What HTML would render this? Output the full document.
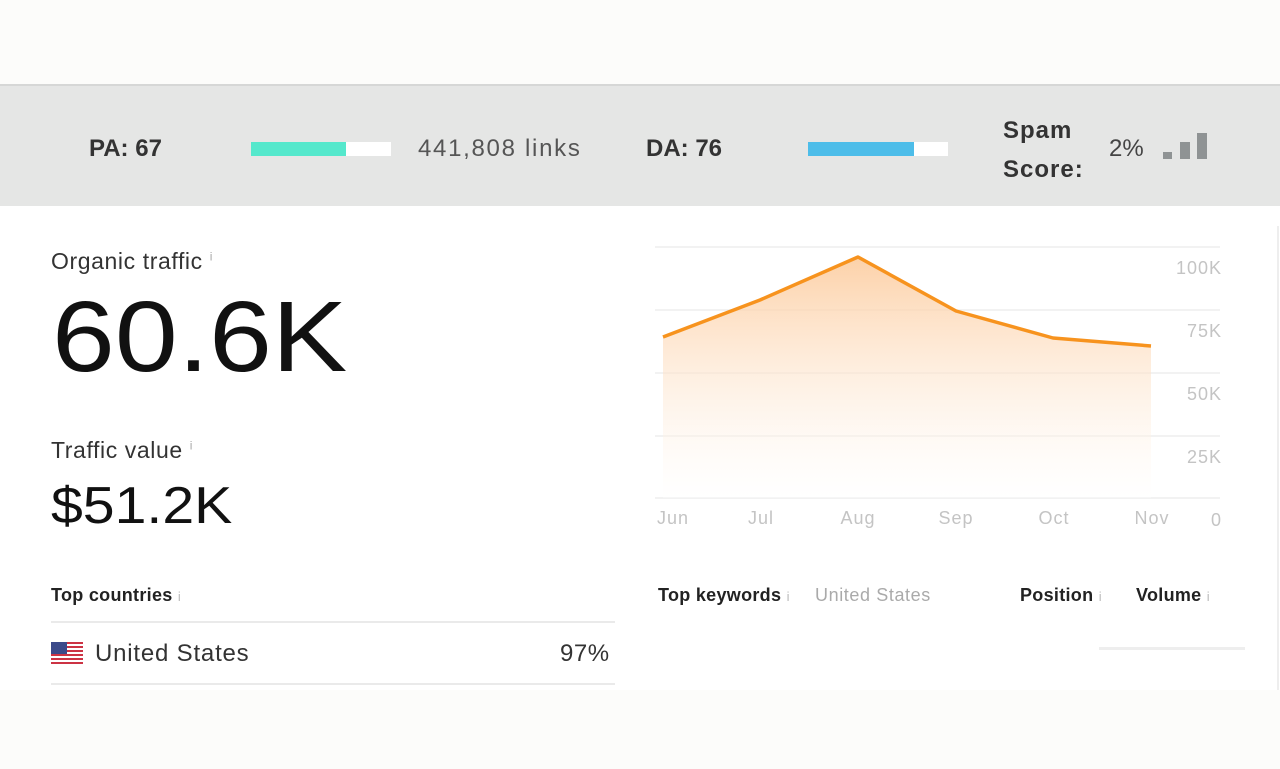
<!DOCTYPE html>
<html><head><meta charset="utf-8"><style>
*{margin:0;padding:0;box-sizing:border-box}
body{width:1280px;height:769px;background:#fcfcfa;position:relative;overflow:hidden;font-family:"Liberation Sans",sans-serif;color:#222}
.a{position:absolute;white-space:nowrap}
.band{position:absolute;left:0;top:84px;width:1280px;height:122px;background:#e5e6e5;border-top:2px solid #d6d7d6}
.main{position:absolute;left:0;top:206px;width:1280px;height:484px;background:#fff}
.b{font-weight:bold;color:#333}
</style></head><body>
<div class="band"></div>
<div class="main"></div>
<div class="a b" style="left:89px;top:135px;font-size:24px">PA: 67</div>
<div class="a" style="left:251px;top:142px;width:140px;height:14px;background:#fff"><div style="width:95px;height:14px;background:#55e8cc"></div></div>
<div class="a" style="left:418px;top:135px;font-size:24px;color:#555;letter-spacing:1.7px">441,808 links</div>
<div class="a b" style="left:646px;top:135px;font-size:24px">DA: 76</div>
<div class="a" style="left:808px;top:142px;width:140px;height:14px;background:#fff"><div style="width:106px;height:14px;background:#4dbde9"></div></div>
<div class="a b" style="left:1003px;top:111px;font-size:24px;line-height:39px;letter-spacing:1px">Spam<br>Score:</div>
<div class="a" style="left:1109px;top:135px;font-size:24px;color:#444">2%</div>
<div class="a" style="left:1163px;top:152px;width:9px;height:7px;background:#8f9394"></div>
<div class="a" style="left:1180px;top:142px;width:10px;height:17px;background:#8f9394"></div>
<div class="a" style="left:1197px;top:133px;width:10px;height:26px;background:#8f9394"></div>
<div class="a" style="left:1277px;top:226px;width:2px;height:464px;background:#eee"></div>

<div class="a" style="left:51px;top:248px;font-size:23px;color:#333;letter-spacing:0.6px">Organic traffic <sup style="font-size:12px;color:#aaa">i</sup></div>
<div class="a" style="left:52px;top:280px;font-size:100px;color:#111;transform:scaleX(1.13);transform-origin:left">60.6K</div>
<div class="a" style="left:51px;top:437px;font-size:23px;color:#333;letter-spacing:0.6px">Traffic value <sup style="font-size:12px;color:#aaa">i</sup></div>
<div class="a" style="left:51px;top:476px;font-size:52px;color:#111;transform:scaleX(1.1);transform-origin:left">$51.2K</div>
<div class="a b" style="left:51px;top:585px;font-size:18px;color:#222;letter-spacing:0.3px">Top countries <span style="font-weight:normal;color:#bbb;font-size:13px">i</span></div>
<div class="a" style="left:51px;top:621px;width:564px;height:2px;background:#eaeaea"></div>
<div class="a" style="left:51px;top:642px;width:32px;height:24px;background:repeating-linear-gradient(#c34 0 2px,#fff 2px 4px)"><div style="width:16px;height:12px;background:#3b4a8a"></div></div>
<div class="a" style="left:95px;top:640px;font-size:24px;color:#333;letter-spacing:0.8px">United States</div>
<div class="a" style="left:560px;top:640px;font-size:24px;color:#333;letter-spacing:0.5px">97%</div>
<div class="a" style="left:51px;top:683px;width:564px;height:2px;background:#eaeaea"></div>

<svg class="a" style="left:0;top:0" width="1280" height="769">
<defs><linearGradient id="g" x1="0" y1="0" x2="0" y2="1"><stop offset="0" stop-color="#fcc999" stop-opacity=".85"/><stop offset="1" stop-color="#fff" stop-opacity=".3"/></linearGradient></defs>
<g stroke="#eee" stroke-width="1.5"><line x1="655" y1="247" x2="1220" y2="247"/><line x1="655" y1="310" x2="1220" y2="310"/><line x1="655" y1="373" x2="1220" y2="373"/><line x1="655" y1="436" x2="1220" y2="436"/><line x1="655" y1="498" x2="1220" y2="498"/></g>
<path d="M663 337L760 300L858 257L956 311L1053 338L1151 346L1151 498L663 498Z" fill="url(#g)"/>
<path d="M663 337L760 300L858 257L956 311L1053 338L1151 346" fill="none" stroke="#f7931e" stroke-width="3.5" stroke-linejoin="round"/>
<g font-family="Liberation Sans" font-size="18" fill="#c4c4c4" text-anchor="end" letter-spacing="1"><text x="1222" y="274">100K</text><text x="1222" y="337">75K</text><text x="1222" y="400">50K</text><text x="1222" y="463">25K</text><text x="1222" y="526">0</text></g>
<g font-family="Liberation Sans" font-size="18" fill="#c4c4c4" text-anchor="middle" letter-spacing="1"><text x="673" y="524">Jun</text><text x="761" y="524">Jul</text><text x="858" y="524">Aug</text><text x="956" y="524">Sep</text><text x="1054" y="524">Oct</text><text x="1152" y="524">Nov</text></g>
</svg>
<div class="a b" style="left:658px;top:585px;font-size:18px;color:#222;letter-spacing:0.3px">Top keywords <span style="font-weight:normal;color:#bbb;font-size:13px">i</span></div>
<div class="a" style="left:815px;top:585px;font-size:18px;color:#aaa;letter-spacing:0.6px">United States</div>
<div class="a b" style="left:1020px;top:585px;font-size:18px;color:#222;letter-spacing:0.3px">Position <span style="font-weight:normal;color:#bbb;font-size:13px">i</span></div>
<div class="a b" style="left:1136px;top:585px;font-size:18px;color:#222;letter-spacing:0.3px">Volume <span style="font-weight:normal;color:#bbb;font-size:13px">i</span></div>
<div class="a" style="left:1099px;top:647px;width:146px;height:3px;background:#eee"></div>
</body></html>
